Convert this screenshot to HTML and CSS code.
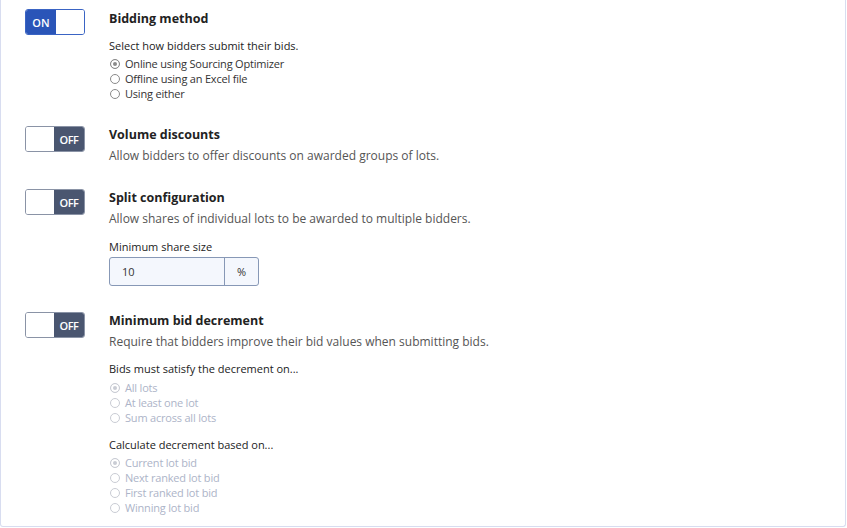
FILE: index.html
```html
<!DOCTYPE html>
<html lang="en">
<head>
    <meta charset="UTF-8">
    <title>Auction settings</title>
    <link rel="stylesheet" href="styles.css">
</head>
<body>
    <div class="panel">
        <!-- Bidding method -->
        <div class="setting">
            <div class="toggle toggle-on">
                <span class="toggle-label">ON</span>
                <span class="toggle-knob"></span>
            </div>
            <div class="setting-body">
                <h3 class="setting-title">Bidding method</h3>
                <p class="field-label">Select how bidders submit their bids.</p>
                <div class="radio-list">
                    <label class="radio"><input type="radio" name="method" checked> Online using Sourcing Optimizer</label>
                    <label class="radio"><input type="radio" name="method"> Offline using an Excel file</label>
                    <label class="radio"><input type="radio" name="method"> Using either</label>
                </div>
            </div>
        </div>

        <!-- Volume discounts -->
        <div class="setting">
            <div class="toggle toggle-off">
                <span class="toggle-knob"></span>
                <span class="toggle-label">OFF</span>
            </div>
            <div class="setting-body">
                <h3 class="setting-title">Volume discounts</h3>
                <p class="setting-desc">Allow bidders to offer discounts on awarded groups of lots.</p>
            </div>
        </div>

        <!-- Split configuration -->
        <div class="setting">
            <div class="toggle toggle-off">
                <span class="toggle-knob"></span>
                <span class="toggle-label">OFF</span>
            </div>
            <div class="setting-body">
                <h3 class="setting-title">Split configuration</h3>
                <p class="setting-desc">Allow shares of individual lots to be awarded to multiple bidders.</p>
                <p class="field-label">Minimum share size</p>
                <div class="input-group">
                    <input type="text" value="10">
                    <span class="input-addon">%</span>
                </div>
            </div>
        </div>

        <!-- Minimum bid decrement -->
        <div class="setting">
            <div class="toggle toggle-off">
                <span class="toggle-knob"></span>
                <span class="toggle-label">OFF</span>
            </div>
            <div class="setting-body">
                <h3 class="setting-title">Minimum bid decrement</h3>
                <p class="setting-desc">Require that bidders improve their bid values when submitting bids.</p>
                <p class="field-label tight">Bids must satisfy the decrement on...</p>
                <div class="radio-list">
                    <label class="radio disabled"><input type="radio" name="scope" checked disabled> All lots</label>
                    <label class="radio disabled"><input type="radio" name="scope" disabled> At least one lot</label>
                    <label class="radio disabled"><input type="radio" name="scope" disabled> Sum across all lots</label>
                </div>
                <p class="field-label loose">Calculate decrement based on...</p>
                <div class="radio-list">
                    <label class="radio disabled"><input type="radio" name="basis" checked disabled> Current lot bid</label>
                    <label class="radio disabled"><input type="radio" name="basis" disabled> Next ranked lot bid</label>
                    <label class="radio disabled"><input type="radio" name="basis" disabled> First ranked lot bid</label>
                    <label class="radio disabled"><input type="radio" name="basis" disabled> Winning lot bid</label>
                </div>
            </div>
        </div>
    </div>
</body>
</html>
```

FILE: styles.css
```css
body {
    font-family: "Open Sans", Arial, sans-serif;
    margin: 0;
    padding: 0;
    background-color: #fff;
    color: #333;
}

.panel {
    width: 846px;
    height: 527px;
    box-sizing: border-box;
    border: 1px solid #d8ddf0;
    border-top: none;
    border-radius: 0 0 3px 3px;
    padding: 10px 0 0 24px;
}

.setting {
    display: flex;
    align-items: flex-start;
    gap: 24px;
    margin-bottom: 25px;
}

.setting:nth-child(2) {
    margin-bottom: 23px;
}

.setting:nth-child(3) {
    margin-bottom: 26px;
}

/* toggle switch */
.toggle {
    display: flex;
    width: 60px;
    height: 26px;
    box-sizing: border-box;
    border-radius: 3px;
    overflow: hidden;
    flex-shrink: 0;
    font-size: 11px;
    font-weight: 600;
    color: #fff;
}

.toggle-on {
    border: 1px solid #3a64c4;
    margin-top: -1px;
}

.toggle-off {
    border: 1px solid #8a93a6;
    margin-top: 0;
}

.toggle-label {
    width: 30px;
    display: flex;
    align-items: center;
    justify-content: center;
}

.toggle-on .toggle-label {
    background-color: #2a55b8;
}

.toggle-off .toggle-label {
    background-color: #4a5670;
    letter-spacing: -0.5px;
}

.toggle-knob {
    flex: 1;
    background-color: #fff;
}

/* text */
.setting-title {
    margin: 0;
    font-size: 12.5px;
    line-height: 18px;
    font-weight: 700;
    color: #222;
}

.setting-desc {
    margin: 2px 0 0;
    font-size: 12px;
    line-height: 20px;
    color: #555;
}

.field-label {
    margin: 10px 0 0;
    font-size: 11px;
    line-height: 16px;
    color: #222;
}

.field-label.tight {
    margin-top: 9px;
}

.field-label.loose {
    margin-top: 12px;
}

.radio-list {
    margin-top: 2px;
    display: flex;
    flex-direction: column;
}

.field-label.tight + .radio-list {
    margin-top: 3px;
}

.radio {
    display: flex;
    align-items: center;
    gap: 5px;
    font-size: 11px;
    line-height: 15px;
    letter-spacing: -0.2px;
    color: #333;
}

.radio input {
    appearance: none;
    margin: 0 0 0 1px;
    width: 10px;
    height: 10px;
    border: 1px solid #8a8a8a;
    border-radius: 50%;
    background-color: #fff;
    box-sizing: border-box;
}

.radio input:checked {
    background-color: #8a8a8a;
    box-shadow: inset 0 0 0 2px #fff;
}

.radio.disabled {
    color: #adb4c8;
}

.radio.disabled input {
    border-color: #c9ccd4;
}

.radio.disabled input:checked {
    background-color: #c9ccd4;
}

/* input with addon */
.input-group {
    display: flex;
    width: 150px;
    height: 29px;
    margin-top: 2px;
    box-sizing: border-box;
    border: 1px solid #8798b6;
    border-radius: 3px;
    background-color: #f4f7fd;
}

.input-group input {
    width: 115px;
    border: none;
    border-right: 1px solid #8798b6;
    background: transparent;
    padding: 0 12px;
    box-sizing: border-box;
    font-family: inherit;
    font-size: 11px;
    color: #333;
    outline: none;
}

.input-addon {
    flex: 1;
    display: flex;
    align-items: center;
    justify-content: center;
    font-size: 11px;
    color: #333;
}
```
